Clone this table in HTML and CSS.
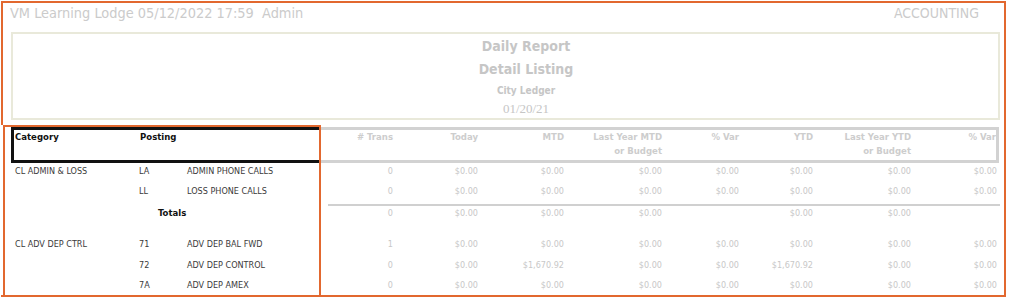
FILE: index.html
```html
<!DOCTYPE html>
<html lang="en">
<head>
<meta charset="utf-8">
<title>Daily Report - Detail Listing</title>
<link rel="stylesheet" href="styles.css">
</head>
<body>
<div class="page">
  <div class="top">
    <div class="appbar">
      <span class="appbar-title">VM Learning Lodge 05/12/2022 17:59&nbsp;&nbsp;Admin</span>
      <span class="appbar-module">ACCOUNTING</span>
    </div>
    <div class="report-head">
      <div class="rh-title">Daily Report</div>
      <div class="rh-title">Detail Listing</div>
      <div class="rh-sub">City Ledger</div>
      <div class="rh-date">01/20/21</div>
    </div>
  </div>

  <div class="report-table">
    <div class="thead">
      <div class="thead-sel">
        <div class="th-text">Category</div>
        <div class="th-text">Posting</div>
      </div>
      <div class="thead-nums">
        <div class="th-num"># Trans</div>
        <div class="th-num">Today</div>
        <div class="th-num">MTD</div>
        <div class="th-num">Last Year MTD<br>or Budget</div>
        <div class="th-num">% Var</div>
        <div class="th-num">YTD</div>
        <div class="th-num">Last Year YTD<br>or Budget</div>
        <div class="th-num">% Var</div>
      </div>
    </div>

    <div class="row">
      <div class="cell">CL ADMIN &amp; LOSS</div>
      <div class="cell">LA</div>
      <div class="cell">ADMIN PHONE CALLS</div>
      <div class="num">0</div><div class="num">$0.00</div><div class="num">$0.00</div><div class="num">$0.00</div>
      <div class="num">$0.00</div><div class="num">$0.00</div><div class="num">$0.00</div><div class="num">$0.00</div>
    </div>
    <div class="row">
      <div class="cell"></div>
      <div class="cell">LL</div>
      <div class="cell">LOSS PHONE CALLS</div>
      <div class="num">0</div><div class="num">$0.00</div><div class="num">$0.00</div><div class="num">$0.00</div>
      <div class="num">$0.00</div><div class="num">$0.00</div><div class="num">$0.00</div><div class="num">$0.00</div>
    </div>
    <div class="totals-sep"></div>
    <div class="row row-totals">
      <div class="cell"></div>
      <div class="cell totals-label">Totals</div>
      <div class="num">0</div><div class="num">$0.00</div><div class="num">$0.00</div><div class="num">$0.00</div>
      <div class="num"></div><div class="num">$0.00</div><div class="num">$0.00</div><div class="num"></div>
    </div>
    <div class="row">
      <div class="cell">CL ADV DEP CTRL</div>
      <div class="cell">71</div>
      <div class="cell">ADV DEP BAL FWD</div>
      <div class="num">1</div><div class="num">$0.00</div><div class="num">$0.00</div><div class="num">$0.00</div>
      <div class="num">$0.00</div><div class="num">$0.00</div><div class="num">$0.00</div><div class="num">$0.00</div>
    </div>
    <div class="row row-tall">
      <div class="cell"></div>
      <div class="cell">72</div>
      <div class="cell">ADV DEP CONTROL</div>
      <div class="num">0</div><div class="num">$0.00</div><div class="num">$1,670.92</div><div class="num">$0.00</div>
      <div class="num">$0.00</div><div class="num">$1,670.92</div><div class="num">$0.00</div><div class="num">$0.00</div>
    </div>
    <div class="row">
      <div class="cell"></div>
      <div class="cell">7A</div>
      <div class="cell">ADV DEP AMEX</div>
      <div class="num">0</div><div class="num">$0.00</div><div class="num">$0.00</div><div class="num">$0.00</div>
      <div class="num">$0.00</div><div class="num">$0.00</div><div class="num">$0.00</div><div class="num">$0.00</div>
    </div>
  </div>

  <div class="highlight"></div>
</div>
</body>
</html>
```

FILE: styles.css
```css
html, body {
  margin: 0;
  padding: 0;
  background: #ffffff;
}

body {
  font-family: "DejaVu Sans Condensed", "DejaVu Sans", sans-serif;
  color: #333333;
}

.page {
  position: relative;
  box-sizing: content-box;
  margin: 1px 0 0 1px;
  width: 1003px;
  height: 292px;
  border: 2px solid #e2682f;
  border-left: 0;
}

/* ---------- top area ---------- */
.top {
  border-left: 2px solid #e2682f;
  height: 122px;
  box-sizing: border-box;
}

.appbar {
  display: flex;
  justify-content: space-between;
  height: 29px;
  padding: 0 25px 0 7px;
  font-size: 14px;
  line-height: 20px;
  color: #cbcbcb;
}

.appbar-title {
  font-size: 14.4px;
}

.report-head {
  margin: 0 4px 0 8px;
  height: 88px;
  box-sizing: border-box;
  border: 2px solid #e9e9da;
  padding: 1px 0 0 41px;
  text-align: center;
  color: #c6c6c6;
}

.rh-title {
  font-weight: bold;
  font-size: 14px;
  line-height: 23px;
}

.rh-sub {
  font-weight: bold;
  font-size: 10px;
  line-height: 19px;
}

.rh-date {
  font-family: "Liberation Serif", serif;
  font-size: 13px;
  line-height: 18px;
}

/* ---------- table ---------- */
.report-table {
  padding-left: 10px;
  font-size: 9px;
}

.thead {
  display: flex;
  margin-top: 2px;
  height: 36px;
}

.thead-sel {
  box-sizing: border-box;
  width: 308px;
  height: 36px;
  border: 3px solid #111111;
  border-right: 0;
  display: grid;
  grid-template-columns: 125px 1fr;
  align-content: start;
}

.th-text {
  padding-left: 1px;
  font-weight: bold;
  font-size: 9.5px;
  line-height: 13px;
  color: #111111;
}

.thead-nums {
  box-sizing: border-box;
  width: 680px;
  height: 36px;
  border: 3px solid #d2d2d2;
  border-left: 0;
  display: grid;
  grid-template-columns: 74px 85px 86px 98px 77px 74px 98px 85px;
  align-content: start;
}

.th-num {
  text-align: right;
  font-weight: bold;
  font-size: 9.5px;
  line-height: 13.5px;
  color: #cdcdcd;
  white-space: nowrap;
}

.row {
  display: grid;
  grid-template-columns: 124px 48px 147px 63px 85px 86px 98px 77px 74px 98px 86px;
  height: 20px;
  box-sizing: border-box;
  padding-top: 1px;
  line-height: 14px;
}

.row-tall {
  height: 21px;
  padding-top: 1.5px;
}

.cell {
  padding-left: 4px;
  white-space: nowrap;
  color: #3a3a3a;
}

.num {
  text-align: right;
  white-space: nowrap;
  color: #c8c8c8;
}

.totals-sep {
  margin: 1px 0 0 317px;
  width: 672px;
  height: 2px;
  background: #d0d0d0;
}

.row-totals {
  height: 30px;
  padding-top: 0;
}

.totals-label {
  grid-column: span 2;
  padding-left: 23px;
  font-weight: bold;
  font-size: 9.5px;
  color: #111111;
}

/* orange selection outline drawn over the first columns */
.highlight {
  position: absolute;
  left: 2px;
  top: 122px;
  width: 318px;
  height: 172px;
  box-sizing: border-box;
  border: 2px solid #e2682f;
  pointer-events: none;
}
```
